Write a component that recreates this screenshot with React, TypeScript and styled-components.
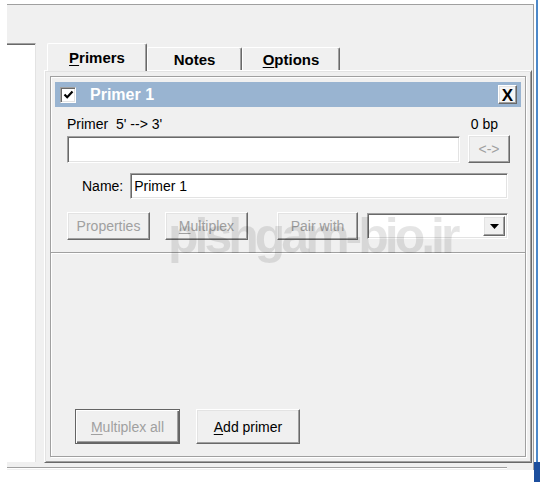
import React from "react";
import styled, { createGlobalStyle, css } from "styled-components";

const Global = createGlobalStyle`
  html, body { margin: 0; padding: 0; background: #ffffff; }
  body { font-family: "Liberation Sans", Arial, sans-serif; font-size: 14px; color: #000; }
  #root { width: 540px; height: 482px; overflow: hidden; }
  * { box-sizing: border-box; }
`;

const Page = styled.div`
  display: flex;
  width: 540px;
  height: 482px;
`;

const Window = styled.div`
  margin: 4px 0 0 7px;
  width: 527px;
  height: 466px;
  background: #f0f0f0;
  border-top: 1px solid #a0a0a0;
  border-right: 1px solid #a0a0a0;
  display: flex;
  flex-direction: column;
`;

const TopSpace = styled.div`
  height: 38px;
  flex: none;
`;

const Body = styled.div`
  height: 420px;
  display: flex;
  flex: none;
`;

const SidePane = styled.div`
  width: 29px;
  height: 419px;
  background: #ffffff;
  border-top: 1px solid #a0a0a0;
  border-right: 1px solid #e3e3e3;
  box-shadow: inset 0 1px 0 #696969;
`;

const TabArea = styled.div`
  margin-left: 8px;
  width: 488px;
  display: flex;
  flex-direction: column;
`;

const TabStrip = styled.div`
  height: 27px;
  display: flex;
  align-items: flex-start;
  padding-left: 3px;
  position: relative;
  z-index: 1;
  flex: none;
`;

const Tab = styled.div<{ $active?: boolean; $w: number }>`
  width: ${(p) => p.$w}px;
  height: ${(p) => (p.$active ? 28 : 23)}px;
  margin-top: ${(p) => (p.$active ? 0 : 4)}px;
  background: #f0f0f0;
  border-top: 1px solid #ffffff;
  border-left: 1px solid #ffffff;
  border-right: 1px solid #696969;
  border-radius: 2px 2px 0 0;
  box-shadow: inset -1px 0 0 #a0a0a0;
  display: flex;
  align-items: center;
  justify-content: center;
  font-weight: bold;
  font-size: 15px;
  padding-bottom: ${(p) => (p.$active ? 1 : 0)}px;
  u { text-decoration-thickness: 1px; text-underline-offset: 2px; }
`;

const TabPanel = styled.div`
  height: 393px;
  background: #f0f0f0;
  border-top: 1px solid #ffffff;
  border-left: 1px solid #ffffff;
  border-right: 1px solid #696969;
  border-bottom: 1px solid #696969;
  box-shadow: inset 1px 1px 0 #e3e3e3, inset -1px -1px 0 #a0a0a0;
  padding: 5px 5px 5px 5px;
  display: flex;
`;

const PrimerBox = styled.div`
  position: relative;
  flex: 1;
  border: 1px solid #a0a0a0;
  box-shadow: inset 1px 1px 0 #ffffff, 1px 1px 0 #ffffff;
  display: flex;
  flex-direction: column;
  overflow: hidden;
`;

const TitleBar = styled.div`
  margin: 5px 4px 0 4px;
  height: 25px;
  background: #99b4d1;
  display: flex;
  align-items: center;
  padding: 0 4px 0 5px;
  flex: none;
`;

const sunken = css`
  background: #ffffff;
  border-top: 1px solid #a0a0a0;
  border-left: 1px solid #a0a0a0;
  border-right: 1px solid #ffffff;
  border-bottom: 1px solid #ffffff;
  box-shadow: inset 1px 1px 0 #696969, inset -1px -1px 0 #e3e3e3;
`;

const raised = css`
  background: #f0f0f0;
  border-top: 1px solid #ffffff;
  border-left: 1px solid #ffffff;
  border-right: 1px solid #696969;
  border-bottom: 1px solid #696969;
  box-shadow: inset -1px -1px 0 #a0a0a0, inset 1px 1px 0 #e3e3e3;
`;

const CheckBox = styled.div`
  ${sunken};
  width: 16px;
  height: 16px;
  display: flex;
  align-items: center;
  justify-content: center;
  flex: none;
`;

const TitleText = styled.div`
  margin-left: 14px;
  color: #ffffff;
  font-weight: bold;
  font-size: 16px;
  flex: 1;
`;

const CloseButton = styled.div`
  ${raised};
  background: #f6f6f6;
  width: 19px;
  height: 19px;
  display: flex;
  align-items: center;
  justify-content: center;
  font-weight: bold;
  font-size: 17px;
  line-height: 1;
  padding-top: 1px;
`;

const Row = styled.div<{ $top: number; $right?: number; $left?: number }>`
  display: flex;
  align-items: center;
  margin-top: ${(p) => p.$top}px;
  padding-left: ${(p) => p.$left ?? 16}px;
  padding-right: ${(p) => p.$right ?? 0}px;
  flex: none;
`;

const Label = styled.div<{ $grow?: boolean }>`
  white-space: pre;
  line-height: 16px;
  ${(p) => (p.$grow ? "flex: 1;" : "")}
`;

const Field = styled.div<{ $w: number; $h: number }>`
  ${sunken};
  width: ${(p) => p.$w}px;
  height: ${(p) => p.$h}px;
  display: flex;
  align-items: center;
  padding-left: 3px;
  flex: none;
`;

const Button = styled.div<{ $w: number; $h: number; $ml?: number; $disabled?: boolean; $framed?: boolean }>`
  ${raised};
  width: ${(p) => p.$w}px;
  height: ${(p) => p.$h}px;
  margin-left: ${(p) => p.$ml ?? 0}px;
  display: flex;
  align-items: center;
  justify-content: center;
  color: ${(p) => (p.$disabled ? "#a0a0a0" : "#000")};
  flex: none;
  white-space: pre;
  ${(p) =>
    p.$framed &&
    css`
      border: 1px solid #646464;
      box-shadow: inset 1px 1px 0 #ffffff, inset -1px -1px 0 #696969, inset -2px -2px 0 #a0a0a0;
    `}
  u { text-decoration-thickness: 1px; text-underline-offset: 2px; }
`;

const Combo = styled.div`
  ${sunken};
  width: 141px;
  height: 26px;
  margin-left: 9px;
  display: flex;
  justify-content: flex-end;
  padding: 2px;
  flex: none;
`;

const ComboArrow = styled.div`
  ${raised};
  width: 22px;
  height: 100%;
  display: flex;
  align-items: center;
  justify-content: center;
`;

const Separator = styled.div`
  margin-top: 12px;
  height: 2px;
  border-top: 1px solid #a0a0a0;
  border-bottom: 1px solid #ffffff;
  flex: none;
`;

const Filler = styled.div`
  flex: 1;
`;

const BottomRow = styled.div`
  display: flex;
  padding-left: 24px;
  margin-bottom: 12px;
  gap: 16px;
  flex: none;
`;

const Watermark = styled.div`
  position: absolute;
  left: 117px;
  top: 134px;
  font-family: "Liberation Sans", Arial, sans-serif;
  font-weight: bold;
  font-size: 50px;
  line-height: 50px;
  letter-spacing: -4px;
  color: rgba(0, 0, 0, 0.1);
  white-space: nowrap;
  pointer-events: none;
`;

const StatusLine = styled.div`
  margin-top: 4px;
  width: 500px;
  height: 2px;
  border-top: 1px solid #a0a0a0;
  border-bottom: 1px solid #ffffff;
`;

const Edge = styled.div`
  width: 6px;
  display: flex;
  flex-direction: column;
`;

const EdgeLine = styled.div`
  flex: 1;
  margin-left: 2px;
  width: 2px;
  background: #4c88c9;
`;

const EdgeBlock = styled.div`
  height: 20px;
  background: #1d4f9e;
`;

export default function App() {
  return (
    <Page>
      <Global />
      <Window>
        <TopSpace />
        <Body>
          <SidePane />
          <TabArea>
            <TabStrip>
              <Tab $active $w={100}>
                <span>
                  <u>P</u>rimers
                </span>
              </Tab>
              <Tab $w={95}>Notes</Tab>
              <Tab $w={98}>
                <span>
                  <u>O</u>ptions
                </span>
              </Tab>
            </TabStrip>
            <TabPanel>
              <PrimerBox>
                <TitleBar>
                  <CheckBox>
                    <svg width="11" height="11" viewBox="0 0 11 11">
                      <polyline points="1.5,5.5 4.2,8.2 9.5,2.5" fill="none" stroke="#000" strokeWidth="2.2" />
                    </svg>
                  </CheckBox>
                  <TitleText>Primer 1</TitleText>
                  <CloseButton>X</CloseButton>
                </TitleBar>
                <Row $top={9} $right={27}>
                  <Label $grow>{"Primer  5' --> 3'"}</Label>
                  <Label>0 bp</Label>
                </Row>
                <Row $top={3}>
                  <Field $w={393} $h={27} />
                  <Button $w={42} $h={28} $ml={8} $disabled>
                    {"<->"}
                  </Button>
                </Row>
                <Row $top={10} $left={31}>
                  <Label>Name:</Label>
                  <Field $w={378} $h={26} style={{ marginLeft: 7 }}>
                    Primer 1
                  </Field>
                </Row>
                <Row $top={13}>
                  <Button $w={83} $h={28} $disabled>
                    Properties
                  </Button>
                  <Button $w={83} $h={28} $ml={15} $disabled>
                    <span>
                      <u>M</u>ultiplex
                    </span>
                  </Button>
                  <Button $w={81} $h={28} $ml={29} $disabled>
                    Pair with
                  </Button>
                  <Combo>
                    <ComboArrow>
                      <svg width="9" height="5" viewBox="0 0 9 5">
                        <polygon points="0,0 9,0 4.5,5" fill="#000" />
                      </svg>
                    </ComboArrow>
                  </Combo>
                </Row>
                <Separator />
                <Filler />
                <BottomRow>
                  <Button $w={105} $h={35} $disabled $framed>
                    <span>
                      <u>M</u>ultiplex all
                    </span>
                  </Button>
                  <Button $w={104} $h={35}>
                    <span>
                      <u>A</u>dd primer
                    </span>
                  </Button>
                </BottomRow>
                <Watermark>pishgam-bio.ir</Watermark>
              </PrimerBox>
            </TabPanel>
          </TabArea>
        </Body>
        <StatusLine />
      </Window>
      <Edge>
        <EdgeLine />
        <EdgeBlock />
      </Edge>
    </Page>
  );
}
